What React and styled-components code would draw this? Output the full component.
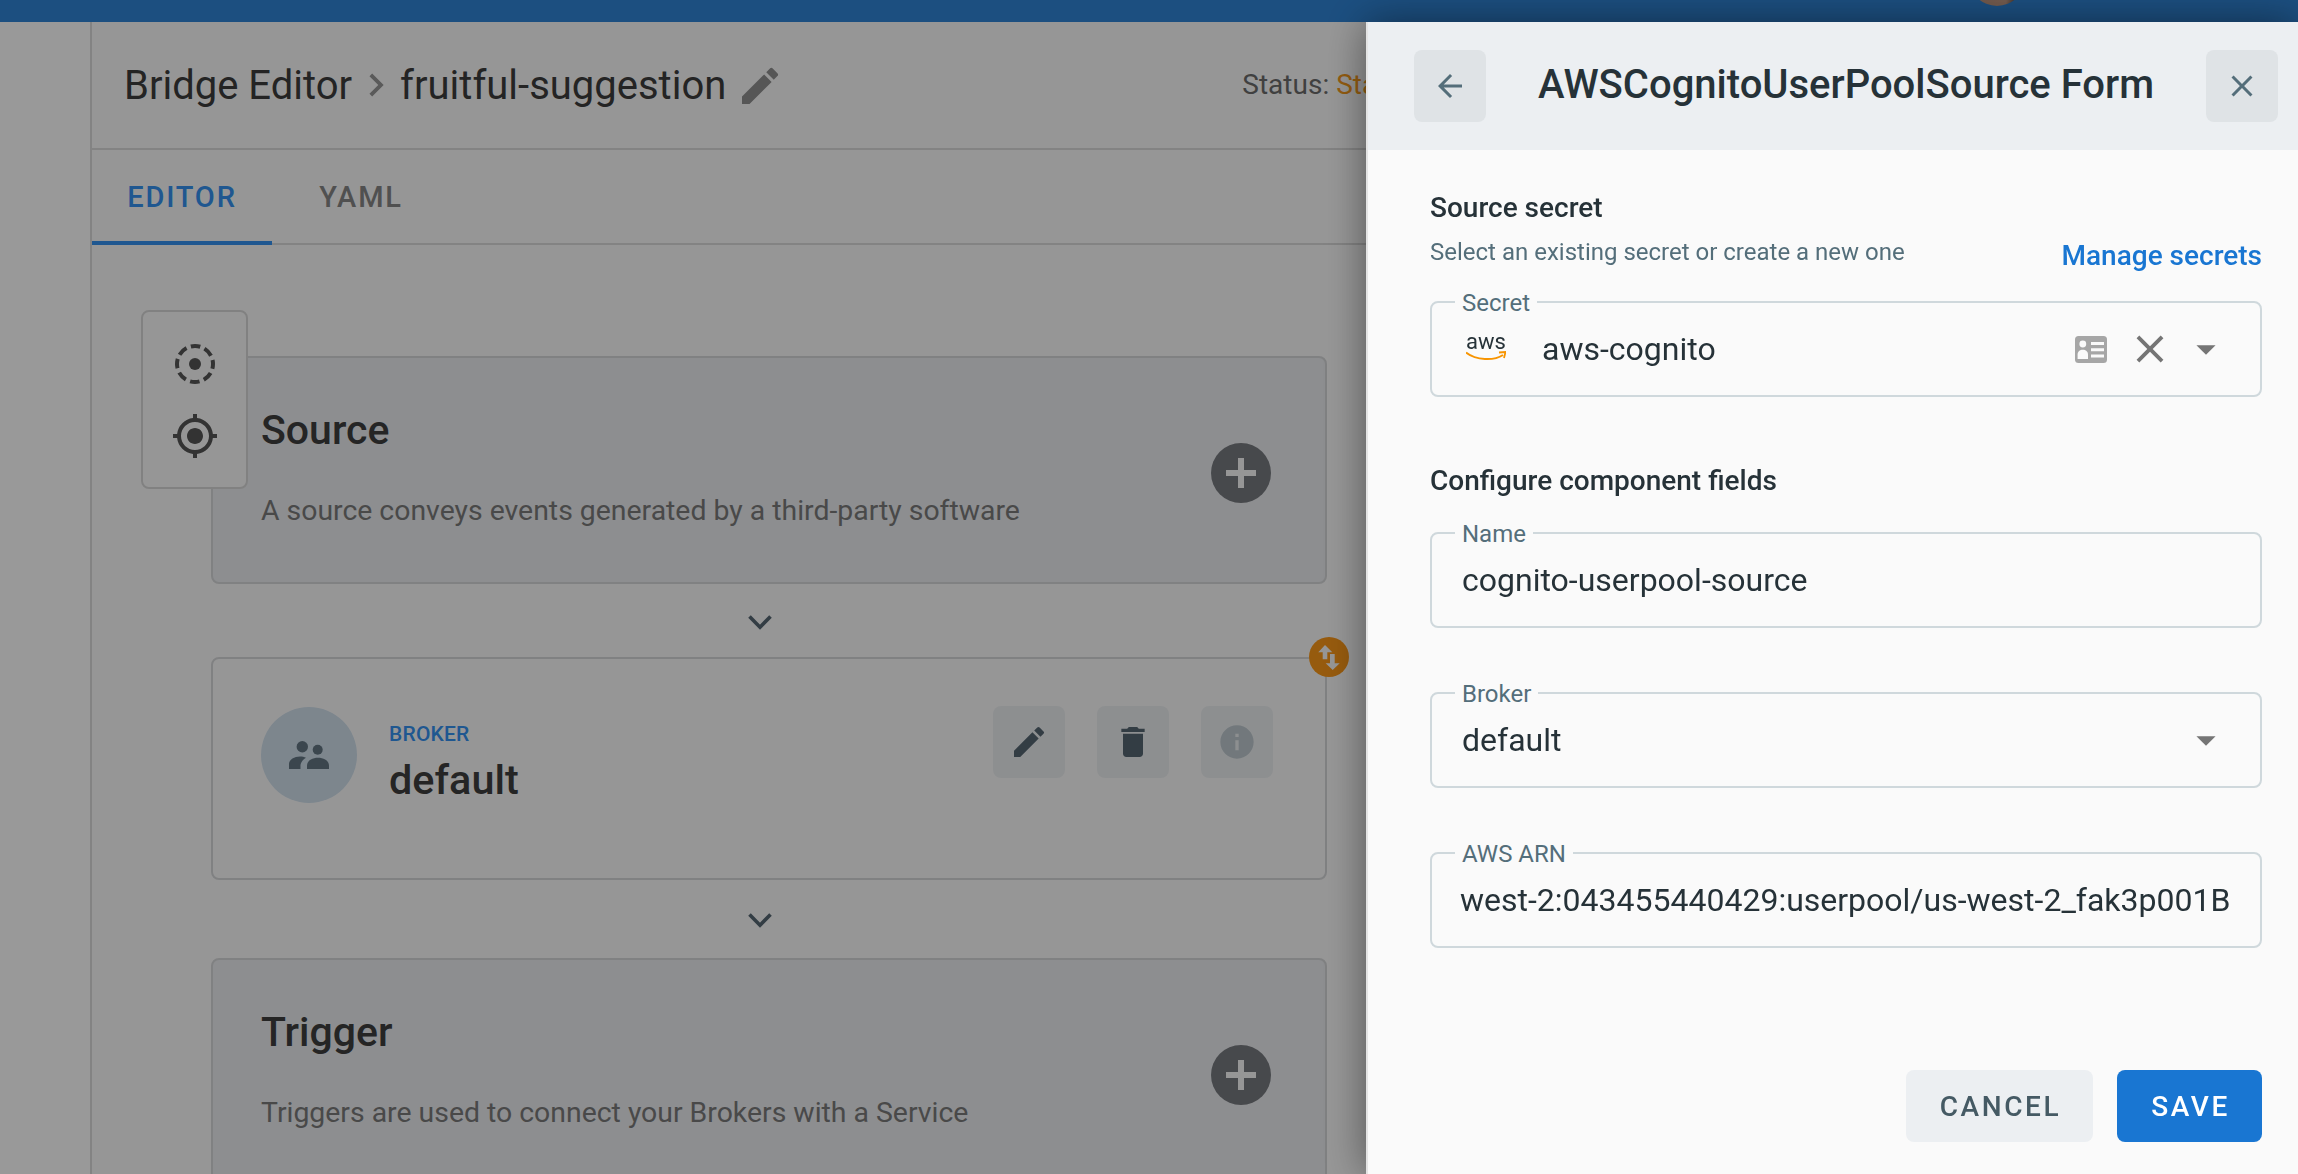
import React from 'react';
import styled, { createGlobalStyle } from 'styled-components';
import {
  MdEdit,
  MdDelete,
  MdInfo,
  MdClose,
  MdArrowBack,
  MdGpsFixed,
  MdArrowDropDown,
  MdChevronRight
} from 'react-icons/md';

const GlobalStyle = createGlobalStyle`
  html, body {
    margin: 0;
    height: 100%;
    overflow: hidden;
    background: #fafafa;
    font-family: Roboto, 'Liberation Sans', sans-serif;
  }
  * { box-sizing: border-box; }
`;

const Page = styled.div`
  display: grid;
  grid-template-rows: 22px 1fr;
  height: 100vh;
  overflow: hidden;
`;

const TopBar = styled.header`
  position: relative;
  overflow: hidden;
  background: #2f84d6;
`;

const Avatar = styled.div`
  position: absolute;
  left: 1969px;
  bottom: 16px;
  width: 56px;
  height: 56px;
  border-radius: 50%;
  background: linear-gradient(100deg, #b98f78 0%, #c19a85 70%, #3a3230 92%);
`;

const Shell = styled.div`
  display: flex;
  min-height: 0;
`;

const Sidebar = styled.nav`
  flex: 0 0 90px;
  background: #ffffff;
`;

const Main = styled.main`
  flex: 1;
  min-width: 0;
  border-left: 2px solid #dadada;
  background: #fbfbfb;
`;

const PageHeader = styled.div`
  display: flex;
  align-items: center;
  height: 128px;
  padding: 0 0 0 32px;
  border-bottom: 2px solid #dadada;
`;

const Crumbs = styled.h1`
  display: flex;
  align-items: center;
  margin: 0;
  font-size: 40px;
  font-weight: 400;
  color: #3d3d3d;
`;

const CrumbArrow = styled(MdChevronRight)`
  margin: 0 1px;
  font-size: 46px;
  color: #969696;
`;

const EditIcon = styled(MdEdit)`
  margin: 2px 0 0 10px;
  font-size: 48px;
  color: #8f8f8f;
`;

const Status = styled.div`
  margin: 0 0 2px 458px;
  font-size: 28px;
  color: #6c6c6c;
  white-space: nowrap;

  span {
    color: #f59a1c;
  }
`;

const Tabs = styled.div`
  display: flex;
  height: 95px;
  border-bottom: 2px solid #dadada;
`;

const Tab = styled.div`
  display: flex;
  align-items: center;
  justify-content: center;
  width: ${({ $width }) => $width}px;
  margin-bottom: -2px;
  padding-top: 3px;
  font-size: 29px;
  font-weight: 500;
  letter-spacing: 1.8px;
  color: ${({ $active }) => ($active ? '#3491f0' : '#858585')};
  border-bottom: 4px solid ${({ $active }) => ($active ? '#3491f0' : 'transparent')};
`;

const Canvas = styled.section`
  position: relative;
  display: flex;
  flex-direction: column;
  width: 1235px;
  padding: 111px 0 0 119px;
`;

const Tools = styled.div`
  position: absolute;
  top: 65px;
  left: 49px;
  z-index: 1;
  display: flex;
  flex-direction: column;
  align-items: center;
  gap: 28px;
  width: 107px;
  height: 179px;
  padding-top: 32px;
  background: #fbfbfb;
  border: 2px solid #d8d8d8;
  border-radius: 8px;
  color: #555;
`;

const Card = styled.article`
  position: relative;
  flex: none;
  height: ${({ $height }) => $height}px;
  padding: 49px 48px 0;
  background: ${({ $plain }) => ($plain ? 'transparent' : '#ebedf0')};
  border: 2px solid #d6d7d9;
  border-radius: 8px;
`;

const CardTitle = styled.h2`
  margin: 0;
  font-size: 41px;
  line-height: 46px;
  font-weight: 500;
  color: #3e3e3e;
`;

const CardText = styled.p`
  margin: 41px 0 0;
  font-size: 28.4px;
  line-height: 34px;
  color: #7a7a7a;
`;

const AddButton = styled.div`
  position: absolute;
  top: 85px;
  right: 54px;
  display: grid;
  place-items: center;
  width: 60px;
  height: 60px;
  border-radius: 50%;
  background: #777a7f;
  color: #fbfbfb;
`;

const Connector = styled.div`
  display: flex;
  align-items: center;
  justify-content: center;
  flex: none;
  height: ${({ $height }) => $height}px;
  padding: 3px 18px 0 0;
  color: #556672;
`;

const BrokerRow = styled.div`
  display: flex;
  align-items: center;
  gap: 32px;
  margin-top: -1px;
`;

const BrokerAvatar = styled.div`
  display: grid;
  place-items: center;
  flex: none;
  width: 96px;
  height: 96px;
  margin-top: -2px;
  border-radius: 50%;
  background: #d0dfec;
  color: #637682;
`;

const BrokerInfo = styled.div`
  padding-top: 15px;
`;

const BrokerLabel = styled.div`
  font-size: 21px;
  line-height: 24px;
  font-weight: 500;
  letter-spacing: 0.2px;
  color: #3491f0;
`;

const BrokerName = styled.div`
  margin-top: 9px;
  font-size: 41.4px;
  line-height: 50px;
  font-weight: 500;
  color: #3e3e3e;
`;

const BrokerActions = styled.div`
  position: absolute;
  top: 47px;
  right: 52px;
  display: flex;
  gap: 32px;
`;

const ActionButton = styled.div`
  display: grid;
  place-items: center;
  width: 72px;
  height: 72px;
  border-radius: 8px;
  background: #eceff1;
  color: ${({ $muted }) => ($muted ? '#bec9cf' : '#556672')};
  font-size: 40px;
`;

const Badge = styled.div`
  position: absolute;
  top: -22px;
  right: -24px;
  width: 40px;
  height: 40px;
  border-radius: 50%;
  background: #fb9818;
  color: #fbfbfb;
`;

const Scrim = styled.div`
  position: fixed;
  inset: 0;
  z-index: 2;
  background: rgba(0, 0, 0, 0.4);
`;

const Drawer = styled.aside`
  position: fixed;
  top: 22px;
  right: 0;
  bottom: 0;
  z-index: 3;
  display: flex;
  flex-direction: column;
  width: 932px;
  background: #fafafa;
  border-left: 2px solid #e4e4e4;
  box-shadow: 0 0 40px rgba(0, 0, 0, 0.45);
`;

const DrawerHeader = styled.div`
  display: flex;
  align-items: center;
  justify-content: space-between;
  flex: none;
  height: 128px;
  padding: 0 20px 0 46px;
  background: #eceff2;
`;

const DrawerTitle = styled.h2`
  margin: 0 0 4px;
  font-size: 40px;
  font-weight: 500;
  color: #263238;
`;

const HeaderButton = styled.div`
  display: grid;
  place-items: center;
  width: 72px;
  height: 72px;
  border-radius: 8px;
  background: #dfe3e6;
  color: #546e7a;
  font-size: 36px;
`;

const DrawerBody = styled.div`
  display: flex;
  flex: 1;
  flex-direction: column;
  min-height: 0;
  padding: 41px 36px 32px 62px;
`;

const SectionTitle = styled.h3`
  margin: ${({ $top }) => $top || 0}px 0 0;
  font-size: 28px;
  line-height: 34px;
  font-weight: 500;
  color: #263238;
`;

const SecretHint = styled.div`
  display: flex;
  align-items: flex-end;
  justify-content: space-between;
  margin-top: 12px;
  font-size: 24px;
  line-height: 30px;
  color: #546e7a;
`;

const ManageLink = styled.a`
  font-size: 28px;
  line-height: 30px;
  font-weight: 500;
  color: #1976d2;
  transform: translateY(4px);
`;

const Field = styled.div`
  position: relative;
  display: flex;
  align-items: center;
  height: 96px;
  margin-top: ${({ $top }) => $top}px;
  padding: 0 30px;
  border: 2px solid #cfd8dc;
  border-radius: 8px;
  font-size: 32px;
  color: #263238;
  white-space: nowrap;
`;

const FieldLabel = styled.label`
  position: absolute;
  top: -14px;
  left: 23px;
  padding: 0 7px;
  background: #fafafa;
  font-size: 24px;
  line-height: 28px;
  color: #546e7a;
`;

const AwsMark = styled.div`
  display: flex;
  flex-direction: column;
  align-items: center;
  flex: none;
  width: 42px;
  margin: -4px 35px 0 3px;
  font-size: 22px;
  line-height: 18px;
  color: #263238;
`;

const FieldValue = styled.div`
  flex: 1;
  min-width: 0;
`;

const ArnValue = styled(FieldValue)`
  margin: 0 -6px 0 -2px;
`;

const FieldIcons = styled.div`
  display: flex;
  align-items: center;
  gap: 10px;
`;

const ClearIcon = styled(MdClose)`
  font-size: 46px;
  color: #757575;
`;

const CaretIcon = styled(MdArrowDropDown)`
  margin-right: 1px;
  font-size: 46px;
  color: #757575;
`;

const IdCardSlot = styled.span`
  display: flex;
  margin-right: 10px;
`;

const Footer = styled.div`
  display: flex;
  justify-content: flex-end;
  gap: 24px;
  margin-top: auto;
`;

const FooterButton = styled.button`
  height: 72px;
  width: ${({ $width }) => $width}px;
  padding: 0 0 0 2px;
  border: 0;
  border-radius: 8px;
  font-family: inherit;
  font-size: 28px;
  font-weight: 500;
  letter-spacing: 2.6px;
  background: ${({ $primary }) => ($primary ? '#1976d2' : '#eceff2')};
  color: ${({ $primary }) => ($primary ? '#ffffff' : '#455a64')};
`;

const FocusIcon = () => (
  <svg width="40" height="40" viewBox="0 0 40 40" fill="none" stroke="currentColor">
    <circle cx="20" cy="20" r="18" strokeWidth="4" strokeDasharray="9.6 4.54" strokeDashoffset="4.8" />
    <circle cx="20" cy="20" r="6" fill="currentColor" stroke="none" />
  </svg>
);

const PlusIcon = () => (
  <svg width="30" height="30" viewBox="0 0 30 30" fill="currentColor">
    <path d="M12 0h6v12h12v6H18v12h-6V18H0v-6h12z" />
  </svg>
);

const ChevronIcon = () => (
  <svg width="24" height="15" viewBox="0 0 24 15" fill="none" stroke="currentColor" strokeWidth="3.6">
    <path d="M1.5 1.5L12 12.2 22.5 1.5" />
  </svg>
);

const SwapIcon = () => (
  <svg width="40" height="40" viewBox="0 0 40 40" fill="currentColor">
    <path d="M16 8l7.3 7.3h-5v7h-4.6v-7h-4.4z" />
    <path d="M21 17h4.7v9.3h5L23.7 33l-7-6.7H21z" />
  </svg>
);

const PeopleIcon = () => (
  <svg width="40" height="28" viewBox="0 0 40 28" fill="currentColor">
    <circle cx="13.3" cy="5.7" r="5.7" />
    <circle cx="28.7" cy="8.7" r="5" />
    <path d="M0 28v-5c0-4.5 5.5-7.5 11-7.5 2.2 0 4.3.4 6 1.2-3 1.6-5 4.2-5.5 7.3V28z" />
    <path d="M18 28v-3.5c0-4.8 5-7.8 11-7.8s11 3 11 7.8V28z" />
  </svg>
);

const IdCardIcon = () => (
  <svg width="32" height="27" viewBox="0 0 32 27">
    <rect width="32" height="27" rx="3.5" fill="#a6a6a6" />
    <circle cx="7.8" cy="8" r="3.4" fill="#fafafa" />
    <path d="M2.6 23v-4.5c0-3 2.2-4.7 5.2-4.7s5.2 1.7 5.2 4.7V23z" fill="#fafafa" />
    <path d="M16 6h13v3H16zM16 12.2h13v3H16zM16 18.4h13v3H16z" fill="#fafafa" />
  </svg>
);

const AwsSmile = () => (
  <svg width="40" height="10" viewBox="0 0 40 10" fill="none">
    <path d="M0 1.5 C10 9.5 28 10 37 4" stroke="#f79400" strokeWidth="2" />
    <path d="M33 1.5 L39.5 1 L38 7" stroke="#f79400" strokeWidth="1.8" />
  </svg>
);

export default function App() {
  return (
    <Page>
      <GlobalStyle />
      <TopBar>
        <Avatar />
      </TopBar>
      <Shell>
        <Sidebar />
        <Main>
          <PageHeader>
            <Crumbs>
              Bridge Editor
              <CrumbArrow />
              fruitful-suggestion
              <EditIcon />
            </Crumbs>
            <Status>
              Status: <span>Starting</span>
            </Status>
          </PageHeader>
          <Tabs>
            <Tab $active $width={180}>EDITOR</Tab>
            <Tab $width={178}>YAML</Tab>
          </Tabs>
          <Canvas>
            <Tools>
              <FocusIcon />
              <MdGpsFixed size={48} />
            </Tools>
            <Card $height={228}>
              <CardTitle>Source</CardTitle>
              <CardText>A source conveys events generated by a third-party software</CardText>
              <AddButton><PlusIcon /></AddButton>
            </Card>
            <Connector $height={73}><ChevronIcon /></Connector>
            <Card $plain $height={223}>
              <BrokerRow>
                <BrokerAvatar><PeopleIcon /></BrokerAvatar>
                <BrokerInfo>
                  <BrokerLabel>BROKER</BrokerLabel>
                  <BrokerName>default</BrokerName>
                </BrokerInfo>
              </BrokerRow>
              <BrokerActions>
                <ActionButton><MdEdit /></ActionButton>
                <ActionButton><MdDelete /></ActionButton>
                <ActionButton $muted><MdInfo /></ActionButton>
              </BrokerActions>
              <Badge><SwapIcon /></Badge>
            </Card>
            <Connector $height={78}><ChevronIcon /></Connector>
            <Card $height={227}>
              <CardTitle>Trigger</CardTitle>
              <CardText>Triggers are used to connect your Brokers with a Service</CardText>
              <AddButton><PlusIcon /></AddButton>
            </Card>
          </Canvas>
        </Main>
      </Shell>
      <Scrim />
      <Drawer>
        <DrawerHeader>
          <HeaderButton><MdArrowBack /></HeaderButton>
          <DrawerTitle>AWSCognitoUserPoolSource Form</DrawerTitle>
          <HeaderButton><MdClose /></HeaderButton>
        </DrawerHeader>
        <DrawerBody>
          <SectionTitle>Source secret</SectionTitle>
          <SecretHint>
            Select an existing secret or create a new one
            <ManageLink>Manage secrets</ManageLink>
          </SecretHint>
          <Field $top={34}>
            <FieldLabel>Secret</FieldLabel>
            <AwsMark>
              aws
              <AwsSmile />
            </AwsMark>
            <FieldValue>aws-cognito</FieldValue>
            <FieldIcons>
              <IdCardSlot><IdCardIcon /></IdCardSlot>
              <ClearIcon />
              <CaretIcon />
            </FieldIcons>
          </Field>
          <SectionTitle $top={67}>Configure component fields</SectionTitle>
          <Field $top={34}>
            <FieldLabel>Name</FieldLabel>
            <FieldValue>cognito-userpool-source</FieldValue>
          </Field>
          <Field $top={64}>
            <FieldLabel>Broker</FieldLabel>
            <FieldValue>default</FieldValue>
            <CaretIcon />
          </Field>
          <Field $top={64}>
            <FieldLabel>AWS ARN</FieldLabel>
            <ArnValue>west-2:043455440429:userpool/us-west-2_fak3p001B</ArnValue>
          </Field>
          <Footer>
            <FooterButton $width={187}>CANCEL</FooterButton>
            <FooterButton $primary $width={145}>SAVE</FooterButton>
          </Footer>
        </DrawerBody>
      </Drawer>
    </Page>
  );
}
